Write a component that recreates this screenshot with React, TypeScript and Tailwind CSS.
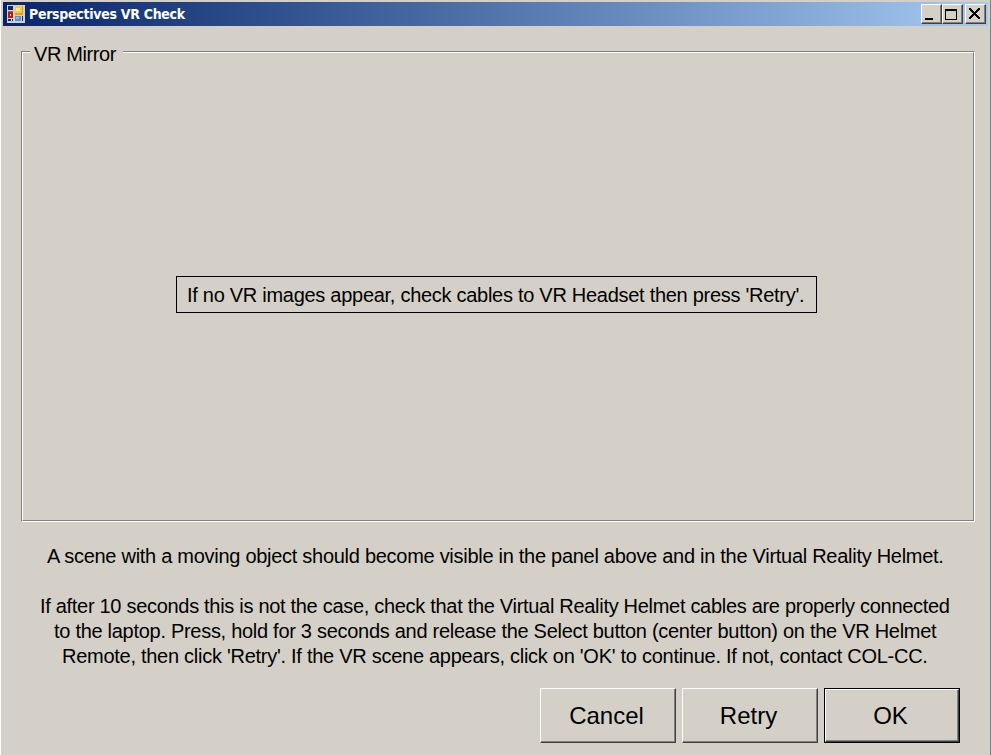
import type { ReactNode } from "react";

function FormIcon() {
  return (
    <svg width="18" height="18" viewBox="0 0 18 18" shapeRendering="crispEdges">
      <rect width="18" height="18" fill="#d4d0c8" />
      <rect x="1" y="1" width="5" height="4" fill="#0c2a78" />
      <rect x="1" y="6" width="5" height="7" fill="#b81c10" />
      <rect x="1" y="6" width="5" height="1" fill="#d85040" />
      <rect x="3" y="9" width="1" height="2" fill="#ffd0b8" />
      <rect x="1" y="14" width="3" height="2" fill="#0c2a78" />
      <rect x="5" y="14" width="1" height="2" fill="#0c2a78" />
      <rect x="8" y="1" width="8" height="9" fill="#e0a010" />
      <rect x="8" y="1" width="7" height="7" fill="#f8c840" />
      <rect x="9" y="3" width="4" height="3" fill="#ffe890" />
      <rect x="8" y="11" width="6" height="5" fill="#5890e0" />
      <rect x="9" y="12" width="3" height="2" fill="#90b8f4" />
      <rect x="15" y="11" width="1" height="5" fill="#0c2a78" />
    </svg>
  );
}

// Stepped diagonal cross, one entry per pixel row
const CROSS_ROWS = [0, 1, 2, 3, 4, 5, 6, 7, 8, 9, 10].map((row) => {
  const start = Math.max(0, row - 1);
  const width = Math.min(10, row + 1) - start + 1;
  return { row, start, width };
});

function CaptionButton({ label, children, gap }: { label: string; children: ReactNode; gap?: boolean }) {
  return (
    <button
      aria-label={label}
      className={`h-[20px] w-[21px] border border-t-white border-l-white border-r-[#404040] border-b-[#404040] bg-[#d4d0c8] ${gap ? "ml-[2px]" : ""}`}
    >
      <span className="block h-[18px] w-[19px] border-r border-b border-[#808080]">
        <svg width="18" height="17" viewBox="0 0 18 17" shapeRendering="crispEdges">
          {children}
        </svg>
      </span>
    </button>
  );
}

function DialogButton({ children, primary }: { children: ReactNode; primary?: boolean }) {
  return (
    <button className={`h-[55px] w-[136px] ${primary ? "border border-black" : ""}`}>
      <span className="block h-full w-full border border-t-white border-l-white border-r-[#404040] border-b-[#404040]">
        <span className="flex h-full w-full items-center justify-center border-r border-b border-[#808080] pt-[2px] pr-[2px] text-[24px] leading-none">
          {children}
        </span>
      </span>
    </button>
  );
}

export default function App() {
  return (
    <div className="flex h-[755px] w-[991px] flex-col overflow-hidden border-r border-l border-r-[#808080] border-l-white bg-[#d4d0c8] pt-[2px] font-['Liberation_Sans',Arial,sans-serif] text-black">
      <header className="mr-[2px] ml-[2px] flex h-[24px] shrink-0 items-center bg-linear-to-r from-[#0a246a] to-[#a6caf0] pr-[2px] pl-[4px]">
        <FormIcon />
        <h1 className="ml-[4px] flex-1 font-['DejaVu_Sans_Condensed','DejaVu_Sans',sans-serif] text-[14px] leading-none font-bold whitespace-nowrap text-white">
          <span className="tracking-[-0.29px]">Perspectives VR Check</span>
        </h1>
        <CaptionButton label="Minimize">
          <rect x="3" y="13" width="8" height="2" />
        </CaptionButton>
        <CaptionButton label="Maximize">
          <path d="M2 4h12v11H2zM3 6v8h10V6z" fillRule="evenodd" />
        </CaptionButton>
        <CaptionButton label="Close" gap>
          {CROSS_ROWS.map(({ row, start, width }) => (
            <g key={row}>
              <rect x={3 + start} y={3 + row} width={width} height="1" />
              <rect x={14 - start - width} y={3 + row} width={width} height="1" />
            </g>
          ))}
        </CaptionButton>
      </header>

      <main className="flex flex-1 flex-col pt-[25px]">
        <section className="relative ml-[20px] flex h-[471px] w-[954px] items-center border border-t-[#808080] border-r-white border-b-white border-l-[#808080]">
          <div className="absolute inset-0 border border-t-white border-r-[#808080] border-b-[#808080] border-l-white" />
          <h2 className="absolute -top-[10px] left-[8px] w-[93px] bg-[#d4d0c8] pl-[4px] text-[20px] leading-[24px] tracking-[-0.4px] whitespace-nowrap">
            VR Mirror
          </h2>
          <p className="relative ml-[154px] mt-[16px] h-[37px] w-[641px] border border-black pl-[10px] text-[20px] leading-[36px] tracking-[-0.28px] whitespace-nowrap">
            If no VR images appear, check cables to VR Headset then press 'Retry'.
          </p>
        </section>

        <section className="mt-[22px] flex flex-col text-[20px] leading-[25px] whitespace-nowrap">
          <p className="ml-[46px] tracking-[-0.28px]">A scene with a moving object should become visible in the panel above and in the Virtual Reality Helmet.</p>
          <p className="mt-[25px] ml-[39px] tracking-[-0.3px]">If after 10 seconds this is not the case, check that the Virtual Reality Helmet cables are properly connected</p>
          <p className="ml-[53px] tracking-[-0.285px]">to the laptop. Press, hold for 3 seconds and release the Select button (center button) on the VR Helmet</p>
          <p className="ml-[61px] tracking-[-0.27px]">Remote, then click 'Retry'. If the VR scene appears, click on 'OK' to continue. If not, contact COL-CC.</p>
        </section>

        <footer className="mt-[19px] ml-[539px] flex gap-[6px]">
          <DialogButton>Cancel</DialogButton>
          <DialogButton>Retry</DialogButton>
          <DialogButton primary>OK</DialogButton>
        </footer>
      </main>
    </div>
  );
}
